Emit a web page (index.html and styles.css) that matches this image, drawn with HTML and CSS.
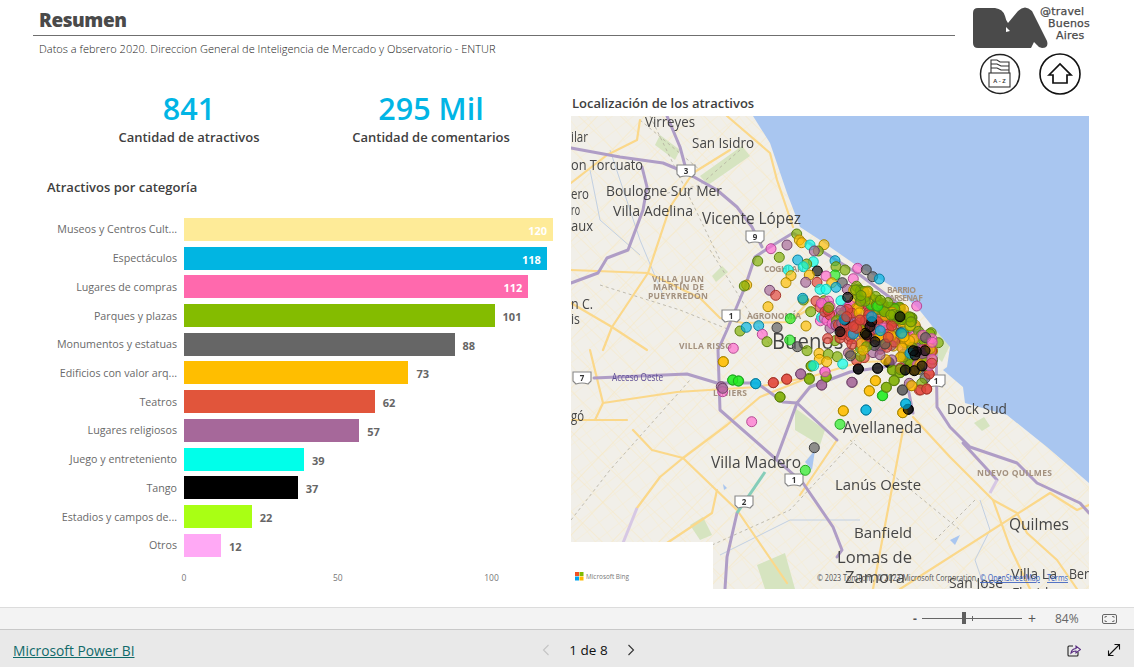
FILE: index.html
```html
<!DOCTYPE html>
<html lang="es">
<head>
<meta charset="utf-8">
<title>Resumen</title>
<link rel="stylesheet" href="styles.css">
</head>
<body>
<div class="app">
  <main class="report">
    <header class="heading">
      <h1 class="title">Resumen</h1>
      <p class="subtitle">Datos a febrero 2020. Direccion General de Inteligencia de Mercado y Observatorio - ENTUR</p>
    </header>

    <div class="brand">
      <div class="logo">
        <svg class="logo-mark" viewBox="973 5 76 44" width="76" height="44" aria-hidden="true">
          <path fill="#4a4a4a" fill-rule="evenodd" d="M978 7H995Q1003 8 1005 15Q1006 20 1008 22L1018 10Q1025 3 1032 10L1047 40Q1049 47 1042 47Q1039 47 1037 44L1034 41L1031 47H978Q973 47 973 42V12Q973 7 978 7ZM1006 26L1010 30L1006 31Z"/>
        </svg>
        <div class="logo-text">
          <span class="l1">@travel</span>
          <span class="l2">Buenos</span>
          <span class="l3">Aires</span>
        </div>
      </div>
      <nav class="nav-icons">
        <svg class="nav-icon" viewBox="0 0 42 42" width="42" height="42" aria-hidden="true">
          <circle cx="21" cy="21" r="19.5" fill="none" stroke="#222" stroke-width="1.500"/>
          <g fill="none" stroke="#333" stroke-width="1.100">
            <path d="M12 20V7H18L21 9H30V20"/>
            <path d="M12 11H18L22 13H30"/>
            <path d="M12 15H18L22 17H30"/>
            <rect x="10" y="20" width="21" height="14"/>
          </g>
          <text class="az" x="20.500" y="30" text-anchor="middle">A - Z</text>
        </svg>
        <svg class="nav-icon" viewBox="0 0 42 42" width="42" height="42" aria-hidden="true">
          <circle cx="21" cy="21" r="20" fill="none" stroke="#111" stroke-width="1.600"/>
          <path fill="none" stroke="#111" stroke-width="1.700" stroke-linejoin="miter" d="M10 22L21 11L32 22H28V30H14V22Z"/>
        </svg>
      </nav>
    </div>

    <section class="left">
      <div class="kpis">
        <div class="kpi">
          <div class="kpi-value">841</div>
          <div class="kpi-label">Cantidad de atractivos</div>
        </div>
        <div class="kpi">
          <div class="kpi-value">295 Mil</div>
          <div class="kpi-label">Cantidad de comentarios</div>
        </div>
      </div>

      <h2 class="chart-title">Atractivos por categoría</h2>
      <div class="chart">
        <div class="row"><span class="cat">Museos y Centros Cult...</span><div class="track"><div class="bar c-cream" style="width:100%"><span class="val in">120</span></div></div></div>
        <div class="row"><span class="cat">Espectáculos</span><div class="track"><div class="bar c-blue" style="width:98.33%"><span class="val in">118</span></div></div></div>
        <div class="row"><span class="cat">Lugares de compras</span><div class="track"><div class="bar c-pink" style="width:93.33%"><span class="val in">112</span></div></div></div>
        <div class="row"><span class="cat">Parques y plazas</span><div class="track"><div class="bar c-green" style="width:84.17%"></div><span class="val">101</span></div></div>
        <div class="row"><span class="cat">Monumentos y estatuas</span><div class="track"><div class="bar c-gray" style="width:73.33%"></div><span class="val">88</span></div></div>
        <div class="row"><span class="cat">Edificios con valor arq...</span><div class="track"><div class="bar c-amber" style="width:60.83%"></div><span class="val">73</span></div></div>
        <div class="row"><span class="cat">Teatros</span><div class="track"><div class="bar c-red" style="width:51.67%"></div><span class="val">62</span></div></div>
        <div class="row"><span class="cat">Lugares religiosos</span><div class="track"><div class="bar c-purple" style="width:47.5%"></div><span class="val">57</span></div></div>
        <div class="row"><span class="cat">Juego y entreteniento</span><div class="track"><div class="bar c-cyan" style="width:32.5%"></div><span class="val">39</span></div></div>
        <div class="row"><span class="cat">Tango</span><div class="track"><div class="bar c-black" style="width:30.83%"></div><span class="val">37</span></div></div>
        <div class="row"><span class="cat">Estadios y campos de...</span><div class="track"><div class="bar c-lime" style="width:18.33%"></div><span class="val">22</span></div></div>
        <div class="row"><span class="cat">Otros</span><div class="track"><div class="bar c-rose" style="width:10%"></div><span class="val">12</span></div></div>
      </div>
      <div class="axis">
        <div class="tick"><span>0</span></div>
        <div class="tick"><span>50</span></div>
        <div class="tick"><span>100</span></div>
      </div>
    </section>

    <section class="right">
      <h2 class="map-title">Localización de los atractivos</h2>
      <svg class="map" id="map" viewBox="571 116 518 473" width="518" height="473" role="img" aria-label="Mapa de Buenos Aires">
        <defs>
          <pattern id="streets" width="15" height="13" patternUnits="userSpaceOnUse" patternTransform="rotate(-38)">
            <path d="M0 0H15M0 0V13" stroke="#f6ecd2" stroke-width="1.100" fill="none"/>
          </pattern>
          <pattern id="streets2" width="34" height="29" patternUnits="userSpaceOnUse" patternTransform="rotate(44)">
            <path d="M0 0H34M0 0V29" stroke="#f7e8c2" stroke-width="1.200" fill="none"/>
          </pattern>
          <g id="shield">
            <path d="M-9 -6H9V3L6 6Q0 4 -6 6L-9 3Z" fill="#fff" stroke="#888" stroke-width="1.100"/>
          </g>
        </defs>

        <g class="base">
          <rect x="571" y="116" width="518" height="473" fill="#f1efe9"/>
          <rect x="571" y="116" width="518" height="473" fill="url(#streets)"/>
          <rect x="571" y="116" width="518" height="473" fill="url(#streets2)"/>

          <g fill="#d6e4c0">
            <path d="M700 176L742 146L750 156L708 185Z"/>
            <path d="M712 276L722 266L728 272L716 282Z"/>
            <path d="M795 408L825 430L820 445L795 430Z"/>
            <path d="M690 525L703 517L712 535L700 540Z"/>
            <path d="M757 565L785 553L795 589H765Z"/>
            <path d="M974 423L984 417L990 426L982 431Z"/>
            <path d="M933 322L950 345L942 362L925 345Z"/>
            <path d="M660 135L680 150L675 160L655 145Z"/>
          </g>

          <path fill="#a9c6f0" d="M753 116L770 143L787 193L800 227L820 240L853 263L893 287L917 307L933 327L950 347L947 367L943 370L963 387L965 403L1007 415L1047 447L1089 483V116Z"/>

          <g fill="none" stroke="#c2d0e2" stroke-width="1">
            <path d="M610 150L640 240L665 300"/>
            <path d="M590 170L600 220L640 255"/>
            <path d="M720 555L790 520L860 520"/>
            <path d="M980 500L990 530L975 560L985 589"/>
          </g>
          <g fill="none" stroke="#b3ad9e" stroke-width=".8" stroke-dasharray="3 3">
            <path d="M740 150L700 185L660 195"/>
            <path d="M600 285L680 310L730 330"/>
            <path d="M571 520L610 470L690 380"/>
            <path d="M640 120L700 170"/>
            <path d="M710 250L770 345"/>
            <path d="M650 116L720 260"/>
            <path d="M712 545L790 510L855 440"/>
            <path d="M850 440L960 530M975 500L935 540"/>
          </g>

          <g fill="none" stroke="#fbd88a" stroke-width="2.200" stroke-linejoin="round" stroke-linecap="round">
            <path d="M727 116L770 153L777 180L793 227"/>
            <path d="M640 120L637 140L607 155L571 183"/>
            <path d="M730 150L693 173L670 207L648 273L612 327L603 350"/>
            <path d="M571 270L648 273L700 298L720 318L743 323"/>
            <path d="M571 303L612 327L647 350"/>
            <path d="M743 323L790 322L810 300"/>
            <path d="M590 350L603 403L595 420H571"/>
            <path d="M603 403L677 392L757 387L810 377L860 362L930 360"/>
            <path d="M595 420H627"/>
            <path d="M633 430L652 450L683 458L737 510L787 583"/>
            <path d="M683 458L727 425L760 397L810 377"/>
            <path d="M683 458L660 477L637 508"/>
            <path d="M717 490L712 513L667 543"/>
            <path d="M913 417L950 457L993 500L1010 547L1030 589"/>
            <path d="M903 430L873 589"/>
            <path d="M900 589L1050 493L1077 510L1089 505"/>
            <path d="M993 500L1017 513L1027 533L1057 560L1077 589"/>
            <path d="M837 440L800 495"/>
            <path d="M825 300L790 320"/>
          </g>

          <g fill="none" stroke="#af9dc6" stroke-width="3" stroke-linejoin="round" stroke-linecap="round">
            <path d="M571 148L620 157L663 163L687 173L717 190L737 207L752 227L762 247"/>
            <path d="M667 116L680 147L687 173"/>
            <path d="M642 167L647 187L643 210L628 250L607 258L598 273L571 283"/>
            <path d="M793 233L770 247L755 257L745 287L727 330L718 350L720 410L777 460L803 483L833 527L842 550L837 557"/>
            <path d="M594 378L687 374L717 383L757 383L783 402L797 403L810 387L850 372L930 360"/>
            <path d="M797 403L777 457"/>
            <path d="M797 403L837 440"/>
            <path d="M907 383L913 413"/>
            <path d="M793 233L860 275L900 305L936 345L937 407L950 427L970 447L1017 463L1037 483L1080 503L1089 513"/>
            <path d="M963 443L997 480"/>
            <path d="M737 513L727 557L725 589"/>
          </g>
          <path d="M765 472L737 513" fill="none" stroke="#85cdb9" stroke-width="3"/>
          <path d="M637 508L623 543" fill="none" stroke="#d7c8e4" stroke-width="3"/>
          <path d="M997 480L990 493" fill="none" stroke="#d7c8e4" stroke-width="3"/>
          <path d="M805 462L815 450L812 470Z" fill="#a9c6f0"/>
          <path d="M723 484L727 488L724 490Z" fill="#a9c6f0"/>
          <path d="M950 540L960 535L955 545Z" fill="#a9c6f0"/>

          <g class="m1">
            <text x="645" y="127" textLength="50" lengthAdjust="spacingAndGlyphs">Virreyes</text>
            <text x="692" y="148" textLength="62" lengthAdjust="spacingAndGlyphs">San Isidro</text>
            <text x="571" y="142" textLength="17" lengthAdjust="spacingAndGlyphs">ilar</text>
            <text x="571" y="170" textLength="72" lengthAdjust="spacingAndGlyphs">on Torcuato</text>
            <text x="571" y="199" textLength="18" lengthAdjust="spacingAndGlyphs">ero</text>
            <text x="571" y="215" textLength="9" lengthAdjust="spacingAndGlyphs">ro</text>
            <text x="571" y="231" textLength="22" lengthAdjust="spacingAndGlyphs">aux</text>
            <text x="606" y="196" textLength="116" lengthAdjust="spacingAndGlyphs">Boulogne Sur Mer</text>
            <text x="613" y="216" textLength="80" lengthAdjust="spacingAndGlyphs">Villa Adelina</text>
            <text x="571" y="309" textLength="22" lengthAdjust="spacingAndGlyphs">n C.</text>
            <text x="571" y="324" textLength="9" lengthAdjust="spacingAndGlyphs">is</text>
            <text x="571" y="421" textLength="13" lengthAdjust="spacingAndGlyphs">gó</text>
            <text x="947" y="414" textLength="60" lengthAdjust="spacingAndGlyphs">Dock Sud</text>
            <text x="835" y="490" textLength="86" lengthAdjust="spacingAndGlyphs">Lanús Oeste</text>
            <text x="854" y="538" textLength="58" lengthAdjust="spacingAndGlyphs">Banfield</text>
            <text x="1011" y="579" textLength="46" lengthAdjust="spacingAndGlyphs">Villa La</text>
            <text x="1069" y="579" textLength="20" lengthAdjust="spacingAndGlyphs">Ber</text>
            <text x="949" y="588" textLength="54" lengthAdjust="spacingAndGlyphs">San José</text>
            <text x="1012" y="598" textLength="44" lengthAdjust="spacingAndGlyphs">Florida</text>
          </g>
          <g class="m2">
            <text x="702" y="224" textLength="99" lengthAdjust="spacingAndGlyphs">Vicente López</text>
            <text x="711" y="468" textLength="90" lengthAdjust="spacingAndGlyphs">Villa Madero</text>
            <text x="843" y="433" textLength="79" lengthAdjust="spacingAndGlyphs">Avellaneda</text>
            <text x="837" y="563" textLength="75" lengthAdjust="spacingAndGlyphs">Lomas de</text>
            <text x="845" y="583" textLength="60" lengthAdjust="spacingAndGlyphs">Zamora</text>
            <text x="1009" y="530" textLength="60" lengthAdjust="spacingAndGlyphs">Quilmes</text>
          </g>
          <text class="m3" x="772" y="349" textLength="124" lengthAdjust="spacingAndGlyphs">Buenos Aires</text>
          <g class="hood">
            <text x="652" y="282" textLength="52" lengthAdjust="spacing">VILLA JUAN</text>
            <text x="653" y="290" textLength="51" lengthAdjust="spacing">MARTÍN DE</text>
            <text x="648" y="299" textLength="60" lengthAdjust="spacing">PUEYRREDÓN</text>
            <text x="747" y="319" textLength="54" lengthAdjust="spacing">AGRONOMÍA</text>
            <text x="764" y="272" textLength="40" lengthAdjust="spacing">COGHLAN</text>
            <text x="679" y="349" textLength="53" lengthAdjust="spacing">VILLA RISSO</text>
            <text x="713" y="396" textLength="34" lengthAdjust="spacing">LINIERS</text>
            <text x="887" y="293" textLength="29" lengthAdjust="spacing">BARRIO</text>
            <text x="889" y="301" textLength="34" lengthAdjust="spacing">ARSENA F</text>
            <text x="977" y="476" textLength="75" lengthAdjust="spacing">NUEVO QUILMES</text>
          </g>
          <text class="road" x="612" y="381" textLength="51" lengthAdjust="spacingAndGlyphs">Acceso Oeste</text>

          <g class="shield-num" text-anchor="middle">
            <use href="#shield" x="686" y="171"/><text x="686" y="174">3</text>
            <use href="#shield" x="755" y="237"/><text x="755" y="240">9</text>
            <use href="#shield" x="731" y="316"/><text x="731" y="319">1</text>
            <use href="#shield" x="582" y="378"/><text x="582" y="381">7</text>
            <use href="#shield" x="794" y="480"/><text x="794" y="483">1</text>
            <use href="#shield" x="744" y="502"/><text x="744" y="505">2</text>
            <use href="#shield" x="936" y="381"/><text x="936" y="384">1</text>
          </g>
        </g>

        <g id="dots"></g>

        <text class="credit" x="817" y="581" textLength="161" lengthAdjust="spacingAndGlyphs">© 2023 TomTom, © 2023 Microsoft Corporation,</text>
        <text class="credit link" x="980" y="581" textLength="60" lengthAdjust="spacingAndGlyphs">© OpenStreetMap</text>
        <text class="credit link" x="1047" y="581" textLength="21" lengthAdjust="spacingAndGlyphs">Terms</text>

        <rect x="571" y="542" width="142" height="47" fill="#fff"/>
        <g>
          <rect x="575" y="572" width="4" height="4" fill="#f25022"/>
          <rect x="579.500" y="572" width="4" height="4" fill="#7fba00"/>
          <rect x="575" y="576.500" width="4" height="4" fill="#00a4ef"/>
          <rect x="579.500" y="576.500" width="4" height="4" fill="#ffb900"/>
        </g>
        <text class="bing" x="586" y="579" textLength="43" lengthAdjust="spacingAndGlyphs">Microsoft Bing</text>
      </svg>
    </section>
  </main>

  <div class="zoombar">
    <span class="z-btn">-</span>
    <div class="slider"><span class="thumb"></span><span class="notch"></span></div>
    <span class="z-btn plus">+</span>
    <span class="z-pct">84%</span>
    <svg class="fit" viewBox="0 0 15 10" width="15" height="10" aria-hidden="true">
      <rect x=".5" y=".5" width="14" height="9" rx="1.500" fill="none" stroke="#666"/>
      <path d="M3 4V2.500H5M10 2.500H12V4M12 6V7.500H10M5 7.500H3V6" fill="none" stroke="#666" stroke-width=".8"/>
    </svg>
  </div>

  <footer class="footer">
    <a class="pbi" href="#">Microsoft Power BI</a>
    <div class="pager">
      <svg viewBox="0 0 8 12" width="8" height="12" aria-hidden="true"><path d="M6.500 1L1.500 6L6.500 11" fill="none" stroke="#c4c4c4" stroke-width="1.100"/></svg>
      <span class="pages">1 de 8</span>
      <svg viewBox="0 0 8 12" width="8" height="12" aria-hidden="true"><path d="M1.500 1L6.500 6L1.500 11" fill="none" stroke="#333" stroke-width="1.100"/></svg>
    </div>
    <div class="foot-icons">
      <svg viewBox="0 0 14 14" width="14" height="14" aria-hidden="true">
        <path d="M6 3H2Q1 3 1 4V12Q1 13 2 13H10Q11 13 11 12V9" fill="none" stroke="#222" stroke-width="1.100"/>
        <path d="M4 10Q4.500 6 9 5.500V3L13.500 6.500L9 10V8Q6 8 4 10Z" fill="none" stroke="#5a2d82" stroke-width="1.100"/>
      </svg>
      <svg viewBox="0 0 14 14" width="14" height="14" aria-hidden="true">
        <path d="M1.500 12.500L12.500 1.500M7.500 1.500H12.500V6.500M1.500 7.500V12.500H6.500" fill="none" stroke="#111" stroke-width="1.100"/>
      </svg>
    </div>
  </footer>
</div>
<script src="map.js"></script>
</body>
</html>
```

FILE: styles.css
```css
* { box-sizing: border-box; }
html, body { margin: 0; padding: 0; height: 100%; overflow: hidden; }
body { font-family: "Open Sans", "Noto Sans", sans-serif; background: #fff; color: #404040; }

.app { width: 1134px; height: 667px; display: flex; flex-direction: column; }

.report {
  height: 607px;
  display: grid;
  grid-template-columns: 571px 384px 134px 45px;
  grid-template-rows: 95px 512px;
}

.heading { grid-column: 1 / 3; padding-left: 33px; }
.title {
  margin: 0;
  padding: 8px 0 2px 6px;
  height: 36px;
  border-bottom: 1px solid #6f6f6f;
  font-size: 19px;
  line-height: 24px;
  font-weight: 800;
  color: #4a4a4a;
  letter-spacing: -.45px;
}
.subtitle {
  margin: 6px 0 0;
  padding-left: 6px;
  font-size: 11px;
  line-height: 14px;
  font-weight: 300;
  letter-spacing: .025px;
  color: #222;
  white-space: nowrap;
}

.brand { grid-column: 3 / 5; padding: 5px 0 0 18px; }
.logo { display: flex; align-items: flex-start; height: 46px; }
.logo-mark { flex: none; margin-top: 1px; }
.logo-text {
  margin: 1px 0 0 -9px;
  display: flex;
  flex-direction: column;
  font-family: "DejaVu Sans", sans-serif;
  font-size: 11px;
  letter-spacing: .2px;
  line-height: 12px;
  font-weight: 400;
  color: #4a4a4a;
  -webkit-text-stroke: .25px #4a4a4a;
}
.logo-text .l2 { margin-left: 8px; }
.logo-text .l3 { margin-left: 16px; }
.nav-icons { display: flex; gap: 18px; margin: 2px 0 0 6px; }
.nav-icon { display: block; }
.az { font-size: 6px; font-family: "Open Sans", sans-serif; font-weight: 600; fill: #333; }

.left { grid-column: 1; grid-row: 2; }
.kpis { display: flex; padding-left: 68px; }
.kpi { width: 242px; text-align: center; }
.kpi-value { font-size: 30.500px; line-height: 26px; font-weight: 600; color: #01b5e5; }
.kpi-label { margin-top: 8px; font-size: 13px; line-height: 17px; font-weight: 600; color: #404040; }

.chart-title {
  margin: 33px 0 0 47px;
  font-size: 13px;
  line-height: 17px;
  font-weight: 600;
  color: #404040;
}

.chart { margin-top: 19px; }
.row { display: flex; align-items: center; height: 28.73px; }
.cat {
  width: 177px;
  text-align: right;
  font-size: 10.700px;
  color: #6a6a6a;
  white-space: nowrap;
  flex: none;
}
.track { margin-left: 7px; width: 369px; display: flex; align-items: center; }
.bar { height: 23px; display: flex; align-items: center; justify-content: flex-end; flex: none; }
.val { margin-left: 8px; margin-top: 2px; font-size: 11px; font-weight: 700; color: #666; }
.val.in { margin: 2px 6px 0 0; color: #fff; }
.c-cream { background: #feeb98; }
.c-blue { background: #01b5e2; }
.c-pink { background: #ff69ad; }
.c-green { background: #84bc00; }
.c-gray { background: #666; }
.c-amber { background: #ffbe00; }
.c-red { background: #e1553b; }
.c-purple { background: #a6689a; }
.c-cyan { background: #00ffea; }
.c-black { background: #000; }
.c-lime { background: #a9ff14; }
.c-rose { background: #ffa9f5; }

.axis { display: flex; padding-left: 184px; margin-top: 12.400px; font-size: 8.500px; line-height: 12px; color: #777; }
.tick { flex: none; width: 153.75px; }
.tick span { display: inline-block; transform: translateX(-50%); }

.right { grid-column: 2 / 4; grid-row: 2; }
.map-title { margin: 0; padding-left: 1px; height: 21px; font-size: 13px; line-height: 17px; font-weight: 600; color: #404040; }
.map { display: block; }
.base { filter: blur(.35px); }

.m1 text, .m2 text, .m3 { fill: #454545; font-family: "Open Sans", sans-serif; }
.m1 text { font-size: 14px; }
.m2 text { font-size: 16px; }
.m3 { font-size: 21px; }
.hood text { font-size: 8.500px; font-weight: 700; fill: #a3917f; font-family: "Open Sans", sans-serif; }
.road { font-size: 10px; fill: #5f4f96; font-family: "Open Sans", sans-serif; }
.shield-num text { font-size: 8px; font-weight: 700; fill: #333; font-family: "Open Sans", sans-serif; }
.credit { font-size: 8.500px; fill: #555; font-family: "Open Sans", sans-serif; }
.credit.link { fill: #3a5fbf; text-decoration: underline; }
.bing { font-size: 8px; fill: #777; font-family: "Open Sans", sans-serif; }
.dot { stroke-width: 1; fill-opacity: .68; }

.zoombar {
  height: 23px;
  display: flex;
  align-items: center;
  padding-left: 913px;
  background: #f3f3f3;
  border-top: 1px solid #dcdcdc;
  border-bottom: 1px solid #c8c8c8;
  color: #555;
  font-size: 12px;
}
.z-btn { width: 9px; line-height: 14px; font-weight: 700; }
.z-btn.plus { width: 10px; margin-left: 6px; font-weight: 400; font-size: 14px; }
.slider { position: relative; width: 100px; height: 1px; background: #666; }
.thumb { position: absolute; left: 40px; top: -6px; width: 4px; height: 12px; background: #5f5f5f; }
.notch { position: absolute; left: 50px; top: -2px; width: 1px; height: 5px; background: #666; }
.z-pct { margin-left: 17px; width: 32px; color: #666; }
.fit { margin-left: 15px; }

.footer {
  height: 37px;
  padding-top: 3px;
  display: grid;
  grid-template-columns: 540px 95px 1fr;
  align-items: center;
  background: #e9e9e9;
}
.pbi { padding-left: 13px; font-size: 13.800px; color: #106a6a; text-decoration: underline; white-space: nowrap; }
.pager { display: flex; align-items: center; justify-content: space-between; font-size: 13.500px; color: #111; font-weight: 500; padding: 0 0 0 2px; }
.pages { white-space: nowrap; }
.foot-icons { display: flex; justify-content: flex-end; gap: 26px; padding-right: 13px; }
```

FILE: map.js
```js
(function () {
  var COLORS = {
    a: ['#ffbe00', '#a98700'], b: ['#01b5e2', '#0b7ea0'], p: ['#ff69d0', '#b54a95'],
    g: ['#7fb000', '#5b7f10'], k: ['#5f5f5f', '#3e3e3e'], r: ['#e1453b', '#a5352b'],
    u: ['#a6689a', '#70456a'], c: ['#00ffea', '#1cc0b5'], n: ['#0b0b0b', '#000000'],
    l: ['#22ee22', '#20a820']
  };
  // Coordinates are read from the three crops of the reference and converted to page space.
  var zone3 = 'a230,42g a238,60a a245,68a a270,75c a312,74a a295,93g a283,93u a153,86p a201,75u a178,112g a113,123g a233,120b a280,125c a345,122b a260,132g a205,150c a250,140c a413,145p a439,149k a375,150g a348,140g a345,165l a292,153n a458,170k a478,177b a268,165a a318,168p a213,167a a198,188a a257,187u a291,187r a335,188a a367,188k a400,176p a80,195a a73,198g a149,211u a167,226r a300,208c a318,208c a348,202b a382,208u a655,368g a628,462r a602,510r a620,507r a575,497a a547,510k a488,527l a499,502g a522,482g a466,482a a448,513a a395,487u a305,495u a268,478g a319,470g a315,455p a242,462u a200,478r a160,488r a107,491b a180,531g a38,480l a55,483l a8,505u a10,425a a40,385p a60,333g a79,322b a116,317b a127,343p a141,365g a171,323k a144,260a a211,296l a258,318a a209,360l a232,380k a261,392g a297,400a a325,403g a298,418a a274,438g a281,437c a320,425a a352,410g a368,432c a410,422r a415,447n a473,445n a507,427n a518,450g a540,458g a370,572a a438,570b a548,578a a565,568n a557,551b a590,258p a250,240g a288,243r a300,262r a272,275g a248,235b a312,242g a320,292r a330,325u a345,362g';
  var zone7 = 'a460,35a a488,90l a506,93l a557,101b a610,98r a650,87r a692,72u a723,48g a718,85g a765,65p a768,82g a755,105u a820,183a a810,223l a733,293k a706,361l a545,215p a630,141g a454,110u a458,125p';
  var zone8 = 'a48,180b a58,122a a97,137l a109,112g a77,92a a133,91g a158,120k a185,107a a167,162b a174,178n a158,188a a208,120r a230,117r a237,72r a225,85k a7,97u a117,38n a82,55k a25,57n a127,60g a150,68g a165,60n a192,60n a217,47n a233,47c a178,100u a215,100g';

  var dots = [];
  function parse(str, ox, oy) {
    str.split(' ').forEach(function (t) {
      var m = /a(\d+),(\d+)(\w)/.exec(t);
      dots.push([ox + m[1] / 3, oy + m[2] / 3, m[3]]);
    });
  }
  parse(zone7, 570, 350);
  parse(zone8, 850, 350);
  parse(zone3, 720, 220);

  var seed = 841;
  function rnd() { seed = (seed * 16807) % 2147483647; return seed / 2147483647; }
  function pick(s) { return s.charAt(Math.floor(rnd() * s.length)); }
  function spread(n, x0, x1, y0, y1, pal) {
    for (var i = 0; i < n; i++) {
      dots.push([720 + (x0 + rnd() * (x1 - x0)) / 3, 220 + (y0 + rnd() * (y1 - y0)) / 3, pick(pal)]);
    }
  }
  // central barrios
  spread(40, 300, 480, 240, 340, 'ppppcaau');
  spread(95, 310, 560, 255, 360, 'rrrrrrrrruupag');
  spread(30, 420, 600, 320, 390, 'rrgaupbg');
  // coastal band (Retiro / Recoleta)
  for (var i = 0; i < 80; i++) {
    var t = rnd();
    dots.push([720 + (395 + t * 175 + rnd() * 26) / 3, 220 + (195 + t * 95 + rnd() * 36) / 3, pick('gggggggggaal')]);
  }
  // south east (San Telmo / La Boca)
  spread(60, 540, 640, 330, 450, 'gggaaaruppk');
  spread(16, 380, 540, 370, 420, 'arguk');
  // foreground dots
  parse('a375,300n a372,298b a400,342b a440,345n a436,340n a455,305n a450,320n a360,335n a465,365n a540,290n a590,395n a615,392n a570,400b a585,405n a580,392n a556,450n a583,452n a606,438n a495,372k a383,232n a455,290b a380,290r a410,325r a505,352r a515,318r a545,340b a400,320r a420,300r', 720, 220);

  var ns = 'http://www.w3.org/2000/svg';
  var g = document.getElementById('dots');
  dots.forEach(function (d) {
    var c = document.createElementNS(ns, 'circle');
    c.setAttribute('cx', d[0].toFixed(1));
    c.setAttribute('cy', d[1].toFixed(1));
    c.setAttribute('r', '5');
    c.setAttribute('class', 'dot');
    c.setAttribute('fill', COLORS[d[2]][0]);
    c.setAttribute('stroke', COLORS[d[2]][1]);
    g.appendChild(c);
  });
})();
```
